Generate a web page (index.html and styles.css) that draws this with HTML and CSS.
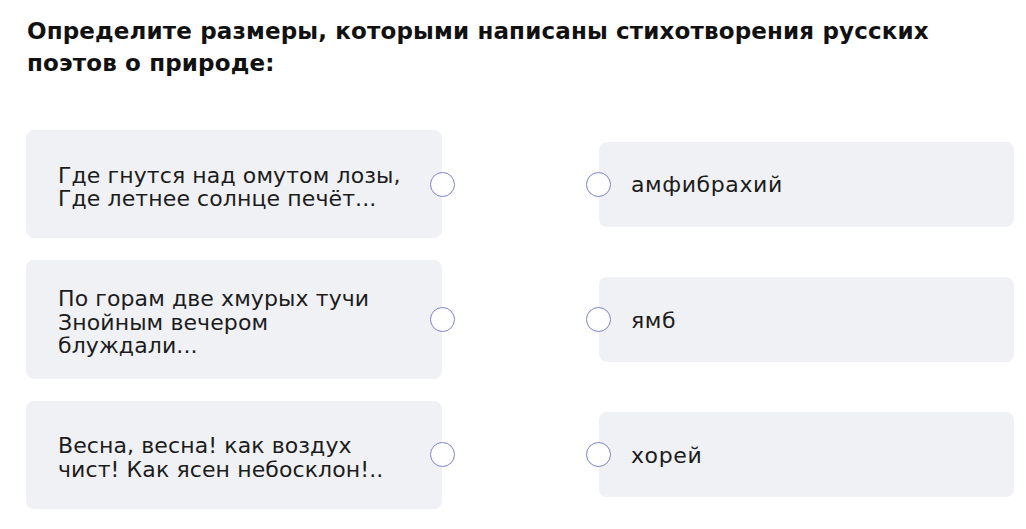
FILE: index.html
```html
<!DOCTYPE html>
<html lang="ru">
<head>
    <meta charset="UTF-8">
    <meta name="viewport" content="width=device-width, initial-scale=1.0">
    <title>Размеры стихотворений</title>
    <link rel="stylesheet" href="styles.css">
</head>
<body>
    <div class="task">
        <h1 class="question">Определите размеры, которыми написаны стихотворения русских поэтов о природе:</h1>

        <div class="pairs">
            <div class="card card-left">
                <p>Где гнутся над омутом лозы,<br>Где летнее солнце печёт...</p>
                <span class="radio radio-right"></span>
            </div>
            <div class="card card-right">
                <span class="radio radio-left"></span>
                <p>амфибрахий</p>
            </div>

            <div class="card card-left">
                <p>По горам две хмурых тучи<br>Знойным вечером блуждали...</p>
                <span class="radio radio-right"></span>
            </div>
            <div class="card card-right">
                <span class="radio radio-left"></span>
                <p>ямб</p>
            </div>

            <div class="card card-left">
                <p>Весна, весна! как воздух чист! Как ясен небосклон!..</p>
                <span class="radio radio-right"></span>
            </div>
            <div class="card card-right">
                <span class="radio radio-left"></span>
                <p>хорей</p>
            </div>
        </div>
    </div>
</body>
</html>
```

FILE: styles.css
```css
body { margin: 0; background: #fff; color: #1c1c1c; font-family: "DejaVu Sans", sans-serif; }
.task { padding: 15px 26px 20px 26px; }
.question { margin: 0 0 51px 1px; font-size: 23px; line-height: 32px; font-weight: bold; color: #111; letter-spacing: 0.15px; max-width: 960px; }
.pairs { display: grid; grid-template-columns: 416px 415px; column-gap: 157px; row-gap: 22px; align-items: center; }
.card { position: relative; background: #f0f1f5; border-radius: 8px; display: flex; align-items: center; box-sizing: border-box; }
.card p { margin: 0; font-size: 22px; line-height: 23.5px; letter-spacing: 0.1px; }
.card-left { min-height: 108px; padding: 27px 30px 21px 32px; }
.card-left p { max-width: 346px; }
.card-right { height: 85px; padding: 2px 0 0 32px; }
.card-right p { letter-spacing: 0.6px; }
.radio { position: absolute; top: 50%; width: 25px; height: 25px; margin-top: -12.5px; box-sizing: border-box; border: 1.5px solid #7f83c9; border-radius: 50%; background: #fff; }
.radio-right { right: -13px; }
.radio-left { left: -13px; }
```
